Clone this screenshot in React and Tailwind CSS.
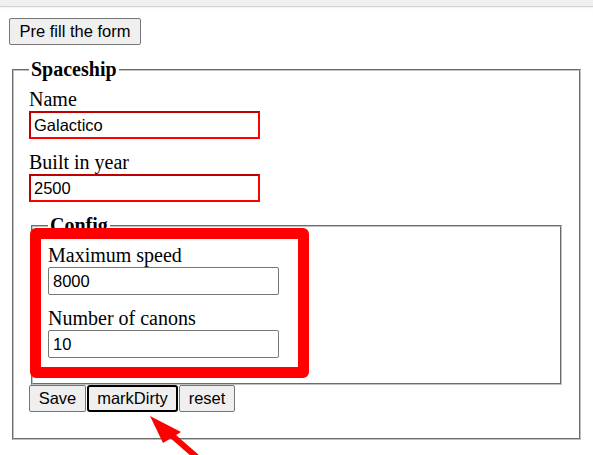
import React from 'react';

const RedField = ({ label, value }) => (
    <div className="mb-[12px]">
        <label className="block leading-[23px]">{label}</label>
        <input
            type="text"
            defaultValue={value}
            className="block w-[231px] h-[28px] px-[3px] border-2 border-t-[#c00000] border-l-[#c00000] border-b-[#f00] border-r-[#f00] bg-white font-['Liberation_Sans'] text-[16.5px] text-black outline-none"
        />
    </div>
);

const PlainField = ({ label, value }) => (
    <div className="mb-[12px]">
        <label className="block leading-[23px]">{label}</label>
        <input
            type="text"
            defaultValue={value}
            className="block w-[231px] h-[28px] px-[4px] border border-[#767676] rounded-[2px] bg-white font-['Liberation_Sans'] text-[16.5px] text-black outline-none"
        />
    </div>
);

const btn = "h-[27px] bg-[#efefef] border border-[#767676] rounded-[2px] font-['Liberation_Sans'] text-[16.5px] text-black leading-none";

export default function App() {
    return (
        <div className="relative w-[593px] h-[455px] overflow-hidden bg-white font-['Liberation_Serif',serif] text-[20px] text-black">
            {/* browser chrome strip */}
            <div className="h-[7px] bg-[#f0f0f0] border-b border-[#d2d2d2] shadow-[0_1px_2px_rgba(0,0,0,0.06)]" />

            <div className="flex pl-[9px] pt-[11px]">
                <button className={`${btn} w-[132px]`}>Pre fill the form</button>
            </div>

            <fieldset className="mx-[12px] mt-[13px] w-[569px] border-2 [border-style:groove] border-[#c0c0c0] px-[15px] pt-[7px] pb-[14px]">
                <legend className="px-[2px] font-bold leading-[23px]">Spaceship</legend>

                <RedField label="Name" value="Galactico" />
                <RedField label="Built in year" value="2500" />

                <fieldset className="mx-[2px] border-2 [border-style:groove] border-[#c0c0c0] px-[15px] pt-[7px] pb-[13px]">
                    <legend className="px-[2px] font-bold leading-[23px]">Config</legend>
                    <PlainField label="Maximum speed" value="8000" />
                    <PlainField label="Number of canons" value="10" />
                </fieldset>

                <div className="flex gap-[1px] mb-[12px]">
                    <button className={`${btn} w-[57px]`}>Save</button>
                    <button className={`${btn} w-[91px] border-2 border-black rounded-[3px]`}>markDirty</button>
                    <button className={`${btn} w-[56px]`}>reset</button>
                </div>
            </fieldset>

            {/* annotation: highlight box */}
            <div className="absolute left-[30px] top-[228px] w-[279px] h-[150px] border-[11px] border-[#f00] rounded-[6px]" />

            {/* annotation: arrow */}
            <svg className="absolute left-0 top-0" width="593" height="455" viewBox="0 0 593 455">
                <line x1="168" y1="432" x2="200" y2="460" stroke="#f00" strokeWidth="6" />
                <polygon points="150,416 181,432 163,443" fill="#f00" />
            </svg>
        </div>
    );
}
